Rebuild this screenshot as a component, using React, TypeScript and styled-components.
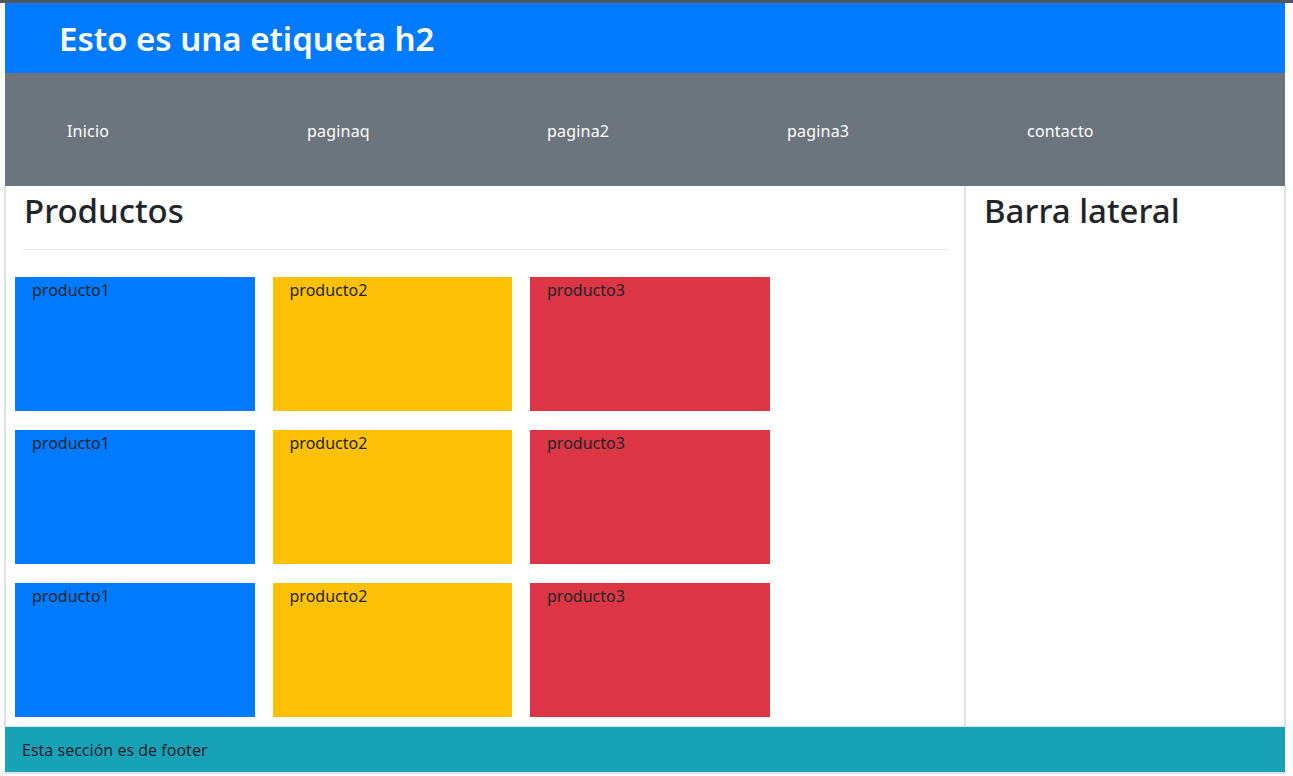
import React from "react";
import styled, { createGlobalStyle } from "styled-components";

const GlobalStyle = createGlobalStyle`
  html, body {
    margin: 0;
    padding: 0;
    background: #fff;
  }
  body {
    font-family: "Noto Sans", "Open Sans", sans-serif;
    color: #212529;
  }
`;

const TopLine = styled.div`
  height: 3px;
  background: #4f565c;
`;

const Page = styled.div`
  width: 1282px;
  margin-left: 4px;
  border-bottom: 2px solid #dee2e6;
`;

const Header = styled.header`
  margin: 0 1px;
  height: 70px;
  background: #007bff;
  display: flex;
  align-items: center;
  padding-left: 54px;
`;

const Title = styled.h2`
  margin: 0;
  font-size: 33px;
  font-weight: 600;
  color: #fff;
`;

const Nav = styled.nav`
  margin: 0 1px;
  height: 113px;
  background: #6c757d;
  display: flex;
  align-items: center;
  padding-left: 62px;
`;

const NavLink = styled.a`
  width: 240px;
  color: #fff;
  font-size: 16px;
  text-decoration: none;
  padding-top: 3px;
  letter-spacing: 0.2px;
`;

const Main = styled.main`
  display: flex;
  height: 540px;
  border-bottom: 1px solid #dee2e6;
`;

const Content = styled.section`
  width: 958px;
  border-left: 2px solid #dee2e6;
  border-right: 2px solid #dee2e6;
`;

const Sidebar = styled.aside`
  flex: 1;
  border-right: 2px solid #dee2e6;
  padding-left: 18px;
`;

const SectionTitle = styled.h2`
  margin: 0;
  padding-top: 5px;
  font-size: 33px;
  font-weight: 500;
  line-height: 40px;
`;

const Heading = styled.div`
  padding: 0 17px 0 18px;
`;

const Rule = styled.hr`
  margin: 18px 0 0 -1px;
  border: 0;
  border-top: 1px solid #e5e5e5;
`;

const Grid = styled.div`
  display: grid;
  grid-template-columns: repeat(3, 239.5px);
  column-gap: 18px;
  row-gap: 19px;
  padding: 27px 0 0 9px;
`;

const Box = styled.div<{ $bg: string }>`
  height: 134px;
  background: ${(p) => p.$bg};
  padding: 2px 0 0 17px;
  box-sizing: border-box;
  font-size: 16px;
  color: #212529;
`;

const Footer = styled.footer`
  margin: 0 1px;
  height: 45px;
  background: #17a2b8;
  display: flex;
  align-items: center;
  padding-left: 17px;
  font-size: 16px;
`;

const productos = [
  { name: "producto1", color: "#007bff" },
  { name: "producto2", color: "#ffc107" },
  { name: "producto3", color: "#dc3545" },
];

const links = ["Inicio", "paginaq", "pagina2", "pagina3", "contacto"];

export default function App() {
  const rows = [0, 1, 2];
  return (
    <>
      <GlobalStyle />
      <TopLine />
      <Page>
        <Header>
          <Title>Esto es una etiqueta h2</Title>
        </Header>
        <Nav>
          {links.map((l) => (
            <NavLink key={l} href="#">
              {l}
            </NavLink>
          ))}
        </Nav>
        <Main>
          <Content>
            <Heading>
              <SectionTitle>Productos</SectionTitle>
              <Rule />
            </Heading>
            <Grid>
              {rows.map((r) =>
                productos.map((p) => (
                  <Box key={r + p.name} $bg={p.color}>
                    {p.name}
                  </Box>
                ))
              )}
            </Grid>
          </Content>
          <Sidebar>
            <SectionTitle>Barra lateral</SectionTitle>
          </Sidebar>
        </Main>
        <Footer>Esta sección es de footer</Footer>
      </Page>
    </>
  );
}
